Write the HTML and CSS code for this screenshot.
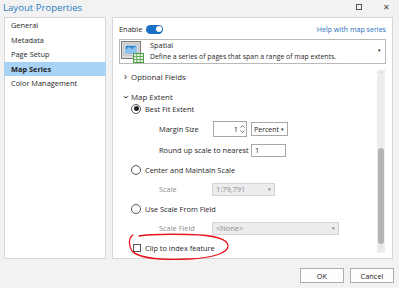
FILE: index.html
```html
<!DOCTYPE html>
<html>
<head>
    <meta charset="UTF-8">
    <title>Layout Properties</title>
    <link rel="stylesheet" href="styles.css">
</head>
<body>
    <div class="dialog">
        <div class="titlebar">
            <span class="title">Layout Properties</span>
            <span class="win-btn max"></span>
            <span class="win-btn close">&#x2715;</span>
        </div>

        <div class="main">
            <ul class="nav">
                <li>General</li>
                <li>Metadata</li>
                <li>Page Setup</li>
                <li class="active">Map Series</li>
                <li>Color Management</li>
            </ul>

            <div class="content">
                <div class="enable-row">
                    <span>Enable</span>
                    <span class="toggle"><span class="knob"></span></span>
                    <a class="help">Help with map series</a>
                </div>

                <div class="type-box">
                    <svg class="type-icon" width="24" height="23" viewBox="0 0 24 23">
                        <rect x="0.5" y="0.5" width="19" height="17" fill="#d9d9d9" stroke="#7a7a7a"/>
                        <rect x="3" y="3" width="14" height="11" fill="#f4f4f4" stroke="#9a9a9a" stroke-width="0.6"/>
                        <rect x="4.5" y="4.5" width="11" height="8" fill="#3c8ad3"/>
                        <path d="M4.5 9 L8 6 L11 8 L15.5 5 L15.5 12.5 L4.5 12.5 Z" fill="#8cc2ee"/>
                        <rect x="12.5" y="12.5" width="10" height="9" fill="#e7f3e2" stroke="#4b9c44"/>
                        <path d="M15.8 12.5 V21.5 M19.2 12.5 V21.5 M12.5 15.5 H22.5 M12.5 18.5 H22.5" stroke="#4b9c44" stroke-width="0.8"/>
                    </svg>
                    <div class="type-text">
                        <div>Spatial</div>
                        <div>Define a series of pages that span a range of map extents.</div>
                    </div>
                    <span class="mini-arrow">&#9662;</span>
                </div>

                <div class="scroll">
                    <div class="scroll-body">
                        <div class="section"><span class="chev">&#x203A;</span>Optional Fields</div>
                        <div class="section open"><span class="chev down">&#x203A;</span>Map Extent</div>

                        <div class="option first"><span class="radio checked"></span>Best Fit Extent</div>
                        <div class="field margin-row">
                            <span class="label w54">Margin Size</span>
                            <span class="spin">1
                                <svg class="spin-arrows" width="5" height="10" viewBox="0 0 5 10">
                                    <path d="M0.5 3.5 L2.5 1.5 L4.5 3.5 M0.5 6.5 L2.5 8.5 L4.5 6.5" fill="none" stroke="#555" stroke-width="0.8"/>
                                </svg>
                            </span>
                            <span class="select">Percent<b>&#9662;</b></span>
                        </div>
                        <div class="field round-row">
                            <span class="label w92">Round up scale to nearest</span>
                            <span class="text-input">1</span>
                        </div>

                        <div class="option"><span class="radio"></span>Center and Maintain Scale</div>
                        <div class="field">
                            <span class="label muted w53">Scale</span>
                            <span class="combo scale">1:79,791<b>&#9662;</b></span>
                        </div>

                        <div class="option"><span class="radio"></span>Use Scale From Field</div>
                        <div class="field">
                            <span class="label muted w53">Scale Field</span>
                            <span class="combo field-combo">&lt;None&gt;<b>&#9662;</b></span>
                        </div>

                        <div class="option check-row"><span class="checkbox"></span>Clip to index feature</div>
                    </div>
                    <div class="scrollbar">
                        <span class="sb-arrow">&#x2C4;</span>
                        <span class="thumb"></span>
                        <span class="sb-arrow">&#x2C5;</span>
                    </div>

                    <svg class="markup" width="104" height="30" viewBox="0 0 104 30">
                        <path d="M6 4 C 2 6, 1 14, 5 20 C 12 28, 40 29, 62 28 C 86 27, 101 22, 101 15 C 101 7, 85 4, 62 3.5 C 42 3, 20 3.5, 12 5" fill="none" stroke="#e8161b" stroke-width="1.3" stroke-linecap="round"/>
                    </svg>
                </div>
            </div>
        </div>

        <div class="footer">
            <button>OK</button>
            <button>Cancel</button>
        </div>
    </div>
</body>
</html>
```

FILE: styles.css
```css
* {
    margin: 0;
    padding: 0;
    box-sizing: border-box;
}

body {
    background: #f2f2f2;
    font-family: 'Open Sans', 'Noto Sans', sans-serif;
    font-size: 7.4px;
    color: #1f1f1f;
    width: 399px;
    height: 288px;
    overflow: hidden;
    white-space: nowrap;
}

.dialog {
    width: 399px;
    height: 288px;
    display: flex;
    flex-direction: column;
}

.titlebar {
    height: 17px;
    display: flex;
    align-items: center;
    padding-left: 3px;
}

.title {
    font-size: 9.6px;
    color: #2a7bc0;
    flex: 1;
    line-height: 14px;
    margin-top: -2px;
}

.win-btn {
    display: inline-block;
    margin-top: -3px;
}

.max {
    width: 6px;
    height: 6px;
    border: 1px solid #555;
    margin-right: 21px;
}

.close {
    font-size: 8px;
    color: #444;
    margin-right: 9px;
    line-height: 8px;
}

.main {
    display: flex;
    gap: 6px;
    padding: 0 6px 0 4px;
    height: 242px;
}

.nav {
    list-style: none;
    width: 102px;
    background: #fff;
    border: 1px solid #d6d6d6;
}

.nav li {
    height: 14.5px;
    line-height: 14.5px;
    padding-left: 6px;
}

.nav li.active {
    background: #a9d3f4;
    font-weight: 700;
    margin: 0 -1px;
    padding-left: 7px;
}

.content {
    flex: 1;
    background: #fff;
    border: 1px solid #d6d6d6;
    padding: 0 6px;
    display: flex;
    flex-direction: column;
}

.enable-row {
    display: flex;
    align-items: center;
    height: 21px;
    padding-top: 1px;
}

.toggle {
    width: 17px;
    height: 9px;
    border-radius: 5px;
    background: #1b6fc4;
    margin-left: 4px;
    position: relative;
}

.knob {
    position: absolute;
    right: 1.5px;
    top: 1.5px;
    width: 6px;
    height: 6px;
    border-radius: 50%;
    background: #fff;
}

.help {
    margin-left: auto;
    color: #2a6fbd;
    font-size: 7.1px;
}

.type-box {
    height: 25px;
    border: 1px solid #b9b9b9;
    display: flex;
    align-items: center;
    padding-left: 1px;
    position: relative;
}

.type-icon {
    margin-top: 1px;
}

.type-text {
    margin-left: 5px;
    line-height: 11px;
    margin-top: -1px;
    font-size: 6.9px;
}

.type-text div:first-child {
    font-size: 7.4px;
}

.mini-arrow {
    position: absolute;
    right: 4px;
    top: 7px;
    font-size: 5px;
}

.scroll {
    display: flex;
    margin-top: 6px;
    height: 183px;
    position: relative;
}

.scroll-body {
    flex: 1;
    padding-left: 5px;
}

.section {
    display: flex;
    align-items: center;
    font-size: 7.9px;
    color: #2a2a2a;
    height: 14px;
}

.section.open {
    margin-top: 6px;
    height: 13px;
}

.chev {
    width: 7px;
    font-size: 10px;
    line-height: 10px;
    margin-top: -2px;
}

.chev.down {
    transform: rotate(90deg);
    margin-top: 1px;
    width: 6px;
    margin-right: 1px;
    text-align: center;
}

.option {
    display: flex;
    align-items: center;
    height: 12px;
    margin-top: 7px;
    padding-left: 7px;
}

.option.first {
    margin-top: 0;
    height: 11px;
}

.radio {
    width: 10px;
    height: 10px;
    border: 1px solid #555;
    border-radius: 50%;
    margin-right: 4px;
    display: flex;
    align-items: center;
    justify-content: center;
}

.radio.checked::after {
    content: "";
    width: 5px;
    height: 5px;
    border-radius: 50%;
    background: #222;
}

.field {
    display: flex;
    align-items: center;
    padding-left: 35px;
    height: 14px;
    margin-top: 6px;
}

.margin-row {
    height: 16px;
    margin-top: 7px;
}

.label {
    display: inline-block;
}

.w54 { width: 54px; }
.w53 { width: 53px; }
.w92 { width: 92px; }

.muted {
    color: #8d8d8d;
}

.spin {
    width: 34px;
    height: 16px;
    border: 1px solid #a8a8a8;
    display: flex;
    align-items: center;
    justify-content: flex-end;
    padding-right: 1px;
}

.spin-arrows {
    margin-left: 2px;
}

.select {
    width: 37px;
    height: 14px;
    border: 1px solid #a8a8a8;
    margin-left: 4px;
    display: flex;
    align-items: center;
    padding-left: 2px;
    font-size: 7px;
}

.select b,
.combo b {
    font-size: 5px;
    font-weight: normal;
    margin-left: auto;
    margin-right: 3px;
}

.text-input {
    width: 35px;
    height: 13px;
    border: 1px solid #a8a8a8;
    display: flex;
    align-items: center;
    padding-left: 3px;
}

.combo {
    height: 13px;
    border: 1px solid #d4d4d4;
    background: #ececec;
    color: #8d8d8d;
    display: flex;
    align-items: center;
    padding-left: 3px;
}

.combo b {
    color: #777;
}

.combo.scale {
    width: 63px;
}

.combo.field-combo {
    width: 127px;
}

.check-row {
    padding-left: 9px;
    margin-top: 7px;
}

.checkbox {
    width: 8px;
    height: 8px;
    border: 1px solid #555;
    margin-right: 4px;
}

.scrollbar {
    width: 8px;
    background: #ececec;
    display: flex;
    flex-direction: column;
    align-items: center;
    margin-right: 1px;
}

.sb-arrow {
    font-size: 6px;
    line-height: 9px;
    height: 9px;
    color: #777;
}

.thumb {
    width: 6px;
    border-radius: 3px;
    background: #b4b4b4;
    margin-top: auto;
    height: 96px;
}

.markup {
    position: absolute;
    left: 8px;
    top: 161px;
}

.footer {
    display: flex;
    justify-content: flex-end;
    gap: 6px;
    padding: 9px 5px 0 0;
}

.footer button {
    width: 44px;
    height: 15px;
    border: 1px solid #adadad;
    background: #fdfdfd;
    font-family: 'Open Sans', 'Noto Sans', sans-serif;
    font-size: 7.4px;
    color: #262626;
}
```
